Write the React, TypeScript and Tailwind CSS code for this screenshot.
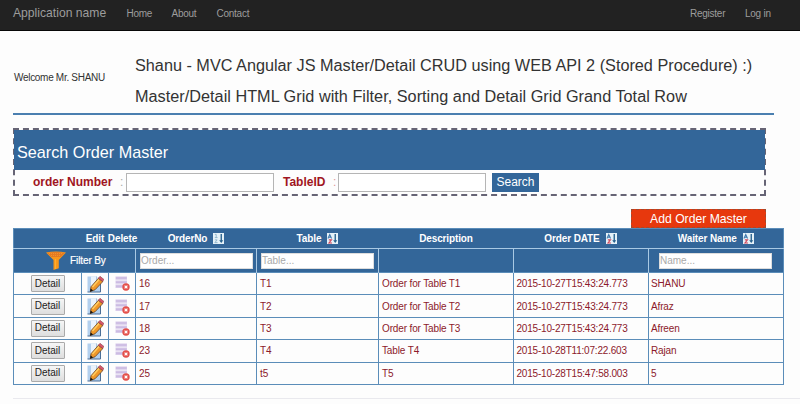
import React from "react";

const rows = [
  ["16", "T1", "Order for Table T1", "2015-10-27T15:43:24.773", "SHANU"],
  ["17", "T2", "Order for Table T2", "2015-10-27T15:43:24.773", "Afraz"],
  ["18", "T3", "Order for Table T3", "2015-10-27T15:43:24.773", "Afreen"],
  ["23", "T4", "Table T4", "2015-10-28T11:07:22.603", "Rajan"],
  ["25", "t5", "T5", "2015-10-28T15:47:58.003", "5"],
];

function SortIcon({ numeric = false }: { numeric?: boolean }) {
  return (
    <svg width="11" height="11" viewBox="0 0 12 12" className="shrink-0">
      <rect width="12" height="12" fill="#e4f1f8" />
      {numeric ? (
        <path d="M2 1.5h1.500v3.500M2 5h3M2 7.500h2.500L2 10.500h3" fill="none" stroke="#8db4ca" strokeWidth="1" />
      ) : (
        <>
          <path d="M1 6l2-4.500 2 4.500M2 4.500h2.500" fill="none" stroke="#3f78ac" strokeWidth="1.100" />
          <path d="M2 7.500h3L2 11h3.500" fill="none" stroke="#d2475a" strokeWidth="1.100" />
        </>
      )}
      <path d="M9 1v8" stroke="#27628f" strokeWidth="1.500" />
      <path d="M6.800 8h4.400L9 11z" fill="#27628f" />
    </svg>
  );
}

function FunnelIcon() {
  return (
    <svg width="20" height="19" viewBox="0 0 20 19" className="shrink-0">
      <path d="M0 1.500Q10-.5 20 1.500L12.800 9v8.300L7.500 19V9z" fill="#f9971a" />
      <path d="M1.200 1.900Q10 .3 18.800 1.900L14.800 6H5.200z" fill="#e57a22" />
      <path d="M3 2.500h14M5 4.500h10" stroke="#f59a2d" strokeWidth=".8" strokeDasharray="1 1" />
      <path d="M9.500 8v10" stroke="#ffae2e" strokeWidth="1.200" />
    </svg>
  );
}

function EditIcon() {
  return (
    <svg width="17" height="18" viewBox="0 0 17 18">
      <path d="M.5 1.500h9l4 4v11.500H.5z" fill="#b3d0ee" />
      <path d="M4 1.500h5.500l4 4V9L4 14z" fill="#eaf3fc" />
      <path d="M.5 17h13V8.500" fill="none" stroke="#4a6f98" strokeWidth="1" />
      <path d="M9.500 1.500v4h4" fill="none" stroke="#8fb2d6" strokeWidth=".7" />
      <path d="M11.500 3.200l4.300 3.400L8 14.800l-4.700 1.700.7-4.800z" fill="#f0982a" stroke="#68431c" strokeWidth=".8" />
      <path d="M12 4.500L5.500 12" stroke="#ffcf64" strokeWidth="1.400" />
      <path d="M11.300 3.200l1.700-1.900 4 3.200-1.500 2z" fill="#d8566a" stroke="#70383e" strokeWidth=".5" />
      <path d="M3 16.800l.7-3.200 2.400 2z" fill="#151515" />
    </svg>
  );
}

function DeleteIcon() {
  return (
    <svg width="15" height="15" viewBox="0 0 15 15">
      <path d="M.5 .5h11.500v3.300H.5zM.5 4.500h11.500v3.300H.5zM.5 8.500h8v3.500h-8z" fill="#d8caea" />
      <path d="M1 2h10.500M1 6.200h10.500M1 10.200h7" stroke="#c2aedb" strokeWidth=".8" />
      <circle cx="11" cy="11" r="3.700" fill="#e4504b" />
      <path d="M9.600 9.600l2.800 2.800M12.400 9.600l-2.800 2.800" stroke="#fff" strokeWidth="1.200" />
    </svg>
  );
}

function HeadCell({ label, sort, pad = "" }: { label: string; sort?: "num" | "az"; pad?: string }) {
  return (
    <th className="h-5 p-0 font-bold tracking-[-0.12px]">
      <div className={`flex items-center justify-center gap-1.5 ${pad}`}>
        {label}
        {sort && <SortIcon numeric={sort === "num"} />}
      </div>
    </th>
  );
}

export default function App() {
  return (
    <div className="h-[404px] w-[800px] overflow-hidden bg-[#fdfdfd] font-['Liberation_Sans',Arial,sans-serif] text-[10px] text-[#333]">
      <nav className="flex h-[31px] items-center border-b border-[#080808] bg-[#222] pb-1 pl-[13px] tracking-[-0.250px] text-[#9d9d9d]">
        <span className="w-[113.500px] pt-px text-[12.150px] tracking-normal">Application name</span>
        <span className="w-[45px]">Home</span>
        <span className="w-[45px]">About</span>
        <span>Contact</span>
        <span className="ml-auto w-[55px]">Register</span>
        <span className="w-[55px]">Log in</span>
      </nav>

      <header className="ml-[13px] flex h-[84px] w-[761px] items-center border-b-2 border-[#4a7fb0]">
        <span className="w-[122px] pt-2.5 pl-px tracking-[-0.300px]">Welcome Mr. SHANU</span>
        <div className="whitespace-nowrap pt-[18px] text-[16.240px] leading-[31.500px]">
          <h1>Shanu - MVC Angular JS Master/Detail CRUD using WEB API 2 (Stored Procedure) :)</h1>
          <h1 className="tracking-[0.020px]">Master/Detail HTML Grid with Filter, Sorting and Detail Grid Grand Total Row</h1>
        </div>
      </header>

      <section className="ml-[13px] mt-[13px] h-[68px] w-[753px] border-2 border-dashed border-[#666475]">
        <h2 className="-mx-px flex h-10 items-center bg-[#336699] pl-[3px] pt-1 text-[16.200px] text-white">Search Order Master</h2>
        <div className="flex h-6 items-center text-[12px] font-bold text-[#a01522]">
          <span className="ml-[18px] w-[87px]">order Number</span>
          <span className="w-[6px] font-normal text-[#aaa]">:</span>
          <input className="h-[19px] w-[148px] border border-[#b5b5b5] bg-white" />
          <span className="ml-[9px] w-[50px]">TableID</span>
          <span className="w-[5px] font-normal text-[#d99]">:</span>
          <input className="h-[19px] w-[148px] border border-[#b5b5b5] bg-white" />
          <button className="ml-[6px] h-[19px] w-[47px] bg-[#336699] font-normal text-white">Search</button>
        </div>
      </section>

      <div className="mt-[13px] flex w-[766px] justify-end">
        <button className="h-[19px] w-[135px] border border-dashed border-[#a3492e] bg-[#e7380d] pt-px text-[12.200px] leading-none text-white">
          Add Order Master
        </button>
      </div>

      <table className="ml-[13px] w-[770px] table-fixed border-collapse border border-[#5b8db9] text-[#8c1a2b]">
        <colgroup>
          <col className="w-[68px]" />
          <col className="w-[27px]" />
          <col className="w-[27px]" />
          <col className="w-[121px]" />
          <col className="w-[122px]" />
          <col className="w-[135px]" />
          <col className="w-[135px]" />
          <col className="w-[135px]" />
        </colgroup>
        <thead className="bg-[#336699] text-white">
          <tr className="h-5">
            <th />
            <HeadCell label="Edit" />
            <HeadCell label="Delete" pad="pl-px" />
            <HeadCell label="OrderNo" sort="num" />
            <HeadCell label="Table" sort="az" />
            <HeadCell label="Description" />
            <HeadCell label="Order DATE" sort="az" pad="pr-px" />
            <HeadCell label="Waiter Name" sort="az" />
          </tr>
          <tr className="h-6 border-y border-[#a9c9e4]">
            <td colSpan={3} className="p-0">
              <div className="flex items-center pl-8">
                <FunnelIcon />
                <span className="ml-1 tracking-[-0.100px] [-webkit-text-stroke:0.2px_white]">Filter By</span>
              </div>
            </td>
            {["Order...", "Table...", "", "", "Name..."].map((p, i) => (
              <td key={i} className="border-l border-[#a9c9e4] p-0">
                {p && (
                  <input
                    placeholder={p}
                    className={`block h-4 w-[113px] border border-[#ddd] bg-white placeholder:text-[#a9a9a9] ${i === 4 ? "ml-[10px]" : "ml-1"}`}
                  />
                )}
              </td>
            ))}
          </tr>
        </thead>
        <tbody>
          {rows.map((r) => (
            <tr key={r[0]} className="h-[22.400px]">
              <td className="border border-[#5b8db9] p-0">
                <button className="mx-auto block h-[17px] w-[34px] rounded-[1px] border border-[#aaa] bg-linear-to-b from-[#f6f6f6] to-[#dedede] leading-none text-[#222]">
                  Detail
                </button>
              </td>
              <td className="border border-[#5b8db9] p-0 pl-[5px]"><EditIcon /></td>
              <td className="border border-[#5b8db9] p-0 pl-[6px]"><DeleteIcon /></td>
              {r.map((c, i) => (
                <td
                  key={i}
                  className={`whitespace-nowrap border border-[#5b8db9] p-0 ${i === 3 ? "pl-[2.500px] tracking-[-0.200px]" : i === 4 ? "pl-[2px] tracking-[-0.140px]" : "pl-[3px] tracking-[-0.140px]"}`}
                >
                  {c}
                </td>
              ))}
            </tr>
          ))}
        </tbody>
      </table>
      <hr className="ml-[13px] mt-[13px] border-[#e9e9ee]" />
    </div>
  );
}
